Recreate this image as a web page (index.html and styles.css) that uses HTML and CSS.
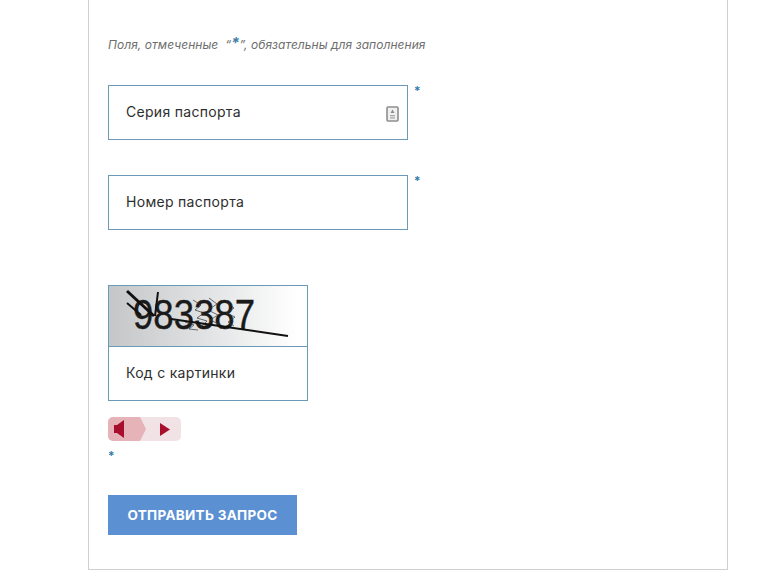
FILE: index.html
```html
<!DOCTYPE html>
<html lang="ru">
<head>
    <meta charset="UTF-8">
    <meta name="viewport" content="width=device-width, initial-scale=1.0">
    <title>Запрос</title>
    <link rel="stylesheet" href="styles.css">
</head>
<body>
    <form class="card">
        <p class="hint">Поля, отмеченные &nbsp;“<span class="hint-star">*</span>”, обязательны для заполнения</p>

        <div class="field">
            <div class="input">
                <span>Серия паспорта</span>
                <svg class="input-icon" width="13" height="16" viewBox="0 0 13 16">
                    <rect x="1" y="1" width="11" height="14" rx="1" fill="#f0f0f0" stroke="#8e8e8e" stroke-width="1.6"/>
                    <path d="M6.5 3.6l2 3.4h-4z" fill="#8e8e8e"/>
                    <path d="M4 9h5v1.2H4zM4 11.3h5v1.2H4z" fill="#a8a8a8"/>
                </svg>
            </div>
            <span class="req">*</span>
        </div>

        <div class="field">
            <div class="input">
                <span>Номер паспорта</span>
            </div>
            <span class="req">*</span>
        </div>

        <div class="captcha">
            <svg class="captcha-img" width="198" height="60" viewBox="0 0 198 60">
                <defs>
                    <linearGradient id="captcha-bg" x1="0" x2="1" y1="0" y2="0">
                        <stop offset="0" stop-color="#c4c6c8"/>
                        <stop offset="0.5" stop-color="#e2e3e4"/>
                        <stop offset="0.95" stop-color="#ffffff"/>
                    </linearGradient>
                </defs>
                <rect width="198" height="60" fill="url(#captcha-bg)"/>
                <text class="captcha-text" x="24" y="43" textLength="122" lengthAdjust="spacingAndGlyphs">983387</text>
                <path class="captcha-noise" d="M84 14l8 5-6 5 9 3-7 5 10 3-6 6M100 12l8 6-9 6 10 5-8 5 9 4M118 16l7 6-8 5 9 4-7 5 6 4M76 36l9 3-5 4 9 1" />
                <path d="M18 5 L45 30" stroke="#111" stroke-width="3" fill="none"/>
                <path d="M18 17 L32 29 M49 6 L46 30 M62 33 L179 50" stroke="#111" stroke-width="2" fill="none"/>
            </svg>
            <div class="captcha-input">Код с картинки</div>
        </div>

        <div class="audio">
            <div class="audio-sound">
                <svg width="10" height="18" viewBox="0 0 10 18"><path d="M0 5h3l7-5v18l-7-5H0z" fill="#a80f2c"/></svg>
            </div>
            <svg class="audio-play" width="10" height="13" viewBox="0 0 10 13"><path d="M0 0l10 6.5L0 13z" fill="#a80f2c"/></svg>
        </div>
        <div class="audio-req">*</div>

        <button class="submit" type="button">ОТПРАВИТЬ ЗАПРОС</button>
    </form>
</body>
</html>
```

FILE: styles.css
```css
body {
    margin: 0;
    background: #fff;
    font-family: Inter, "Open Sans", sans-serif;
    color: #2e2e2e;
}
.card {
    box-sizing: border-box;
    width: 640px;
    height: 570px;
    margin-left: 88px;
    padding: 35px 19px 0;
    border: 1px solid #d0d0d0;
    border-top: none;
}
.hint {
    margin: 0 0 32px;
    height: 18px;
    line-height: 18px;
    font-size: 12px;
    letter-spacing: 0.05px;
    font-style: italic;
    color: #6e6e6e;
}
.hint-star {
    color: #3d7fa8;
    font-size: 15px;
    font-weight: bold;
    position: relative;
    top: -1px;
}
.field {
    display: flex;
    gap: 6px;
    margin-bottom: 35px;
}
.input {
    box-sizing: border-box;
    width: 300px;
    height: 55px;
    padding: 0 8px 2px 17px;
    border: 1px solid #6a9ab8;
    display: flex;
    align-items: center;
    justify-content: space-between;
    font-size: 14px;
    letter-spacing: 0.3px;
}
.input-icon {
    margin-top: 4px;
}
.req {
    color: #2f78ab;
    font-size: 12px;
    font-weight: 600;
    line-height: 12px;
}
.captcha {
    box-sizing: border-box;
    width: 200px;
    margin-top: 55px;
    border: 1px solid #6a9ab8;
}
.captcha-img {
    display: block;
    border-bottom: 1px solid #6a9ab8;
}
.captcha-text {
    font-family: "Liberation Sans", sans-serif;
    font-size: 42px;
    fill: #1a1a1a;
    stroke: #1a1a1a;
    stroke-width: 0.4;
}
.captcha-noise {
    fill: none;
    stroke: #333;
    stroke-width: 0.7;
}
.captcha-input {
    height: 53px;
    padding-left: 17px;
    padding-bottom: 2px;
    box-sizing: border-box;
    display: flex;
    align-items: center;
    font-size: 14px;
    letter-spacing: 0.3px;
}
.audio {
    width: 73px;
    height: 24px;
    margin-top: 16px;
    border-radius: 5px;
    background: #f1e3e5;
    display: flex;
    align-items: center;
    overflow: hidden;
}
.audio-sound {
    width: 38px;
    height: 24px;
    padding-left: 6px;
    box-sizing: border-box;
    background: #e6b3b8;
    clip-path: polygon(0 0, 32px 0, 38px 50%, 32px 100%, 0 100%);
    display: flex;
    align-items: center;
}
.audio-play {
    margin-left: 14px;
}
.audio-req {
    margin-top: 7px;
    height: 47px;
    color: #2f78ab;
    font-size: 12px;
    font-weight: 600;
    line-height: 16px;
}
.submit {
    display: block;
    width: 189px;
    height: 40px;
    padding: 0;
    border: none;
    background: #5b90d3;
    color: #fff;
    font-family: Inter, sans-serif;
    font-size: 13.5px;
    font-weight: 700;
    letter-spacing: 0.3px;
}
```
